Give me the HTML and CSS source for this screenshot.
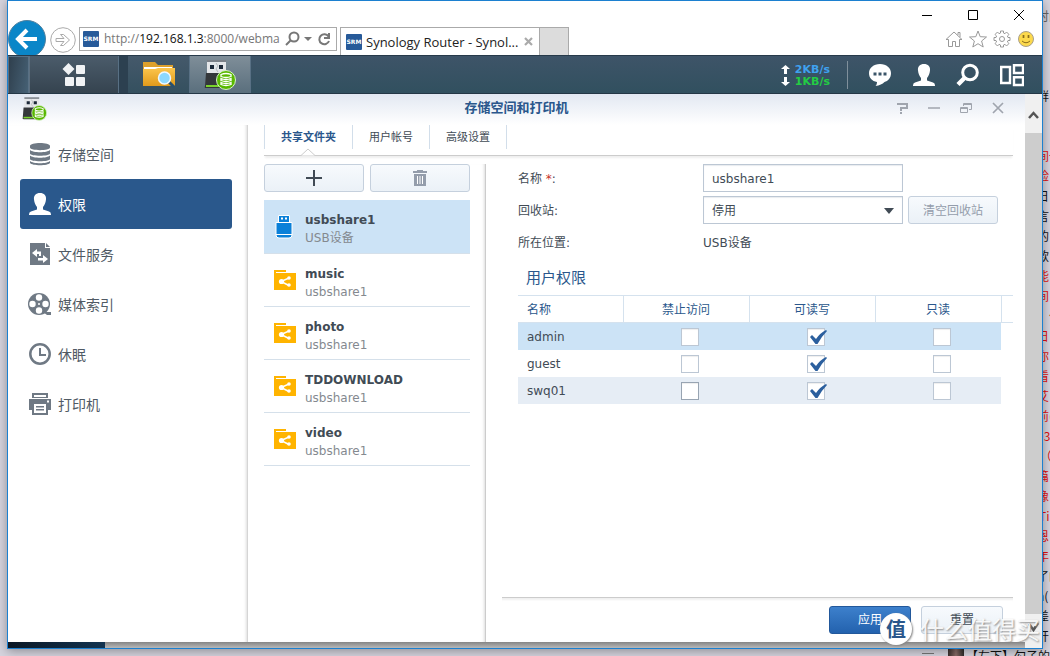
FILE: index.html
```
<!DOCTYPE html>
<html lang="zh-CN">
<head>
<meta charset="utf-8">
<title>Synology Router - Synology</title>
<link rel="stylesheet" href="styles.css">
</head>
<body>
<svg class="defs" aria-hidden="true">
  <defs>
    <linearGradient id="folderGold" x2="0" y2="1"><stop offset="0" stop-color="#fcc54c"/><stop offset="1" stop-color="#e09a1c"/></linearGradient>
  </defs>
  <symbol id="usb" viewBox="0 0 32 30">
    <path d="M3 1h19v12H3z" fill="#e4e6e9"/><path d="M3 0h19v2H3z" fill="#7b8088"/>
    <path d="M6 5h4v4H6zM15 5h4v4h-4z" fill="#1c2838"/><path d="M12 3l2 3-2 3 2 3" fill="none" stroke="#b5b8bc"/>
    <path d="M2 13h21v13q0 2-2 2H2q-2 0-1-2z" fill="#34373a"/><path d="M2 25h15v2H2z" fill="#78d22c"/>
    <circle cx="22" cy="20" r="9.5" fill="#58b800" stroke="#d5f0c5"/>
    <path d="M17 14.500q5-2 10 0v2q-5 2-10 0zM17 18.500q5 2 10 0v2q-5 2-10 0zM17 22.500q5 2 10 0v2q-5 2-10 0z" fill="none" stroke="#fff" stroke-width="1.300"/>
  </symbol>
  <symbol id="user" viewBox="0 0 24 24"><path d="M12 1c4 0 6.500 2.500 6 6.500-.3 3.500-1.500 5.500-3 7.500v2.500l6 2q2 .7 2 3V23H1v-.5q0-2.300 2-3l6-2V15c-1.500-2-2.700-4-3-7.500C5.500 3.500 8 1 12 1z" fill="currentColor"/></symbol>
  <symbol id="share" viewBox="0 0 24 22"><path d="M1 0h12v2H1zM1 2h2v1h20v17H1z" fill="#ffb400"/><path d="M16 8L8 11.500l8 4" stroke="#fff" stroke-width="1.500" fill="none"/><circle cx="8.500" cy="11.500" r="2.600" fill="#fff"/><circle cx="16" cy="8" r="1.800" fill="#fff"/><circle cx="16" cy="15" r="1.800" fill="#fff"/></symbol>
  <symbol id="tick" viewBox="0 0 20 18"><path d="M2 9l2-2 4 4q4-6 10-9l1 1q-5 5-9.500 13h-2z" fill="#2b5f9e"/></symbol>
</svg>

<main class="browser">
  <header class="chrome">
    <nav class="address-row">
      <button class="back" aria-label="后退"><svg viewBox="0 0 38 38" width="38" height="38"><circle cx="19" cy="19" r="18.500" fill="#0a86c8" stroke="#4d7f9e"/><path d="M29 19H11M19 10l-9 9 9 9" fill="none" stroke="#fff" stroke-width="4"/></svg></button>
      <button class="forward" aria-label="前进"><svg viewBox="0 0 26 26" width="26" height="26"><circle cx="13" cy="13" r="12.300" fill="#fff" stroke="#aaa"/><path d="M6 11.500h8l-3.500-4h3l6 5.500-6 5.500h-3l3.500-4H6z" fill="none" stroke="#aaa"/></svg></button>
      <div class="address">
        <span class="favicon">SRM</span>
        <span class="url">http://<b>192.168.1.3</b>:8000/webma</span>
        <svg viewBox="0 0 48 16" width="48" height="16" fill="none" stroke="#777" stroke-width="2"><circle cx="9" cy="6" r="4.500"/><path d="M6 9l-5 5"/><path d="M19 6h8l-4 4z" fill="#777" stroke="none"/><path d="M43.500 5.500A5 5 0 1 0 44 10M44 2v5h-5"/></svg>
      </div>
      <div class="tab"><span class="favicon">SRM</span><span class="tab-title">Synology Router - Synol...</span>
        <button class="plain" aria-label="关闭标签"><svg viewBox="0 0 9 9" width="9" height="9"><path d="M1 1l7 7M8 1L1 8" stroke="#aaa" stroke-width="2.200"/></svg></button></div>
      <button class="new-tab" aria-label="新标签"></button>
    </nav>
    <div class="chrome-right">
      <div class="window-buttons">
        <button class="plain" aria-label="最小化"><svg viewBox="0 0 12 12" width="12" height="12"><path d="M1 6.500h10" stroke="#000"/></svg></button>
        <button class="plain" aria-label="最大化"><svg viewBox="0 0 12 12" width="12" height="12"><path d="M1.500 1.500h9v9h-9z" stroke="#000" fill="none"/></svg></button>
        <button class="plain" aria-label="关闭"><svg viewBox="0 0 12 12" width="12" height="12"><path d="M1 1l10 10M11 1L1 11" stroke="#000"/></svg></button>
      </div>
      <div class="browser-tools">
        <button class="plain" aria-label="主页"><svg viewBox="0 0 18 18" width="18" height="18" fill="none" stroke="#999"><path d="M1 9.500L9 2l8 7.500H14.500v7h-4v-5h-3v5h-4v-7zM13 5V2.500h2V7"/></svg></button>
        <button class="plain" aria-label="收藏"><svg viewBox="0 0 18 18" width="18" height="18" fill="none" stroke="#999"><path d="M9 1l2.200 5.700 6.300.3-4.900 4 1.600 6L9 13.700 3.800 17l1.600-6-4.900-4 6.300-.3z"/></svg></button>
        <button class="plain" aria-label="设置"><svg viewBox="0 0 18 18" width="18" height="18" fill="none" stroke="#999"><path d="M7.500 1h3v2l1.500.7L13.500 2 16 4.500 14.400 6l.6 1.500h2v3h-2l-.6 1.500 1.600 1.500-2.500 2.500-1.500-1.700-1.500.7v2h-3v-2L6 14.300 4.500 16 2 13.500 3.600 12 3 10.500H1v-3h2L3.600 6 2 4.500 4.500 2 6 3.700 7.500 3z"/><circle cx="9" cy="9" r="2.500"/></svg></button>
        <button class="plain" aria-label="反馈"><svg viewBox="0 0 18 18" width="18" height="18"><circle cx="9" cy="9" r="7.500" fill="#fcd94c" stroke="#aaa08a"/><path d="M6.500 5v3M11.500 5v3" stroke="#8a6d1c" stroke-width="1.700"/><path d="M5 11q4 3.500 8 0" fill="none" stroke="#8a6d1c"/></svg></button>
      </div>
    </div>
  </header>

  <div class="taskbar">
    <div class="task-left">
      <span class="task-edge"></span>
      <button class="task task-menu" aria-label="主菜单"><svg viewBox="0 0 24 24" width="24" height="24" fill="#f0f2f4"><path d="M6.500 0l6 6-6 6-6-6z"/><rect x="14" y="2" width="9" height="9" rx="1"/><rect x="3" y="14" width="9" height="9" rx="1"/><rect x="14" y="14" width="9" height="9" rx="1"/></svg></button>
      <span class="task-gap"></span>
      <button class="task" aria-label="文件浏览"><svg viewBox="0 0 34 28" width="34" height="28"><path d="M1 1h12l3 3h15v7H1z" fill="#dda02c"/><path d="M2 6h28v4H2z" fill="#fff"/><path d="M1 8h12l3-1h17v18H1z" fill="url(#folderGold)"/><path d="M26 20l6 6" stroke="#285070" stroke-width="3"/><circle cx="22.500" cy="17" r="6" fill="#8cd8ff" stroke="#f0f8ff" stroke-width="1.500"/></svg></button>
      <button class="task task-active" aria-label="存储空间"><svg width="32" height="30"><use href="#usb"/></svg></button>
    </div>
    <div class="task-right">
      <div class="speed">
        <span class="up"><svg viewBox="0 0 9 9" width="9" height="9"><path d="M4.500 0L9 4H6v5H3V4H0z" fill="#fff"/></svg>2KB/s</span>
        <span class="down"><svg viewBox="0 0 9 9" width="9" height="9"><path d="M4.500 9L9 5H6V0H3v5H0z" fill="#fff"/></svg>1KB/s</span>
      </div>
      <button class="plain" aria-label="通知"><svg viewBox="0 0 24 24" width="24" height="24"><path d="M12 1c6.500 0 11 4 11 9s-3 8-6.500 9c-2 2-5 3.500-9 4 1-1 1.500-2.500 1.500-4C4 18 1 15 1 10s4.500-9 11-9z" fill="#fff"/><path d="M5.500 9.500h3v3h-3zM10.500 9.500h3v3h-3zM15.500 9.500h3v3h-3z" fill="#3a5568"/></svg></button>
      <button class="plain" aria-label="用户"><svg width="24" height="24"><use href="#user"/></svg></button>
      <button class="plain" aria-label="搜索"><svg viewBox="0 0 24 24" width="24" height="24" fill="none" stroke="#fff"><circle cx="14" cy="9.500" r="7.300" stroke-width="3"/><path d="M8.500 15L2 21.500" stroke-width="4.500"/></svg></button>
      <button class="plain" aria-label="小工具"><svg viewBox="0 0 24 24" width="24" height="24" fill="none" stroke="#fff" stroke-width="2.400"><path d="M1.200 4h8.800v16H1.200zM14 2.200h9v7.800h-9zM14 14.200h9V22h-9z"/></svg></button>
    </div>
  </div>

  <div class="viewport">
    <div class="desktop">
      <section class="app">
        <header class="app-head">
          <svg width="25" height="24"><use href="#usb"/></svg>
          <h1>存储空间和打印机</h1>
          <div class="app-buttons">
            <button class="plain" aria-label="帮助"><svg viewBox="0 0 12 12" width="12" height="12" fill="none" stroke="#a0a5ae" stroke-width="2"><path d="M1 2h10v4H5v3M5 10v2"/></svg></button>
            <button class="plain" aria-label="最小化"><svg viewBox="0 0 12 12" width="12" height="12"><path d="M0 6h12" stroke="#a0a5ae" stroke-width="1.500"/></svg></button>
            <button class="plain" aria-label="还原"><svg viewBox="0 0 12 12" width="12" height="12" fill="none" stroke="#a0a5ae"><path d="M.5 5.500h7v5h-7zM3.500 4V1.500h8v6H9M3.500 2.500h8M0 6.500h8"/></svg></button>
            <button class="plain" aria-label="关闭"><svg viewBox="0 0 12 12" width="12" height="12"><path d="M1 1l10 10M11 1L1 11" stroke="#a0a5ae" stroke-width="1.700"/></svg></button>
          </div>
        </header>
        <div class="app-body">
          <nav class="side">
            <a href="#storage"><svg viewBox="0 0 24 24" width="24" height="24" fill="#6f7984"><path d="M2 4c0-4 20-4 20 0v1.500c0 3.500-20 3.500-20 0zM2 8c3 3 17 3 20 0v3.500c0 3-20 3-20 0zM2 13.500c3 3 17 3 20 0V17c0 3-20 3-20 0zM2 19c3 3 17 3 20 0v2c-2 3-18 3-20 0z"/></svg><span>存储空间</span></a>
            <a class="current" href="#rights"><svg width="24" height="24"><use href="#user"/></svg><span>权限</span></a>
            <a href="#files"><svg viewBox="0 0 24 24" width="24" height="24"><path d="M2 1h15v5h5v17H2z" fill="#6f7984"/><path d="M18 1l4 4h-4z" fill="#6f7984"/><path d="M4 11l5-4v2.500h4V14h-2v-2H9v3zM20 17l-5 4v-2.500h-5V16h5v-3z" fill="#fff"/></svg><span>文件服务</span></a>
            <a href="#media"><svg viewBox="0 0 24 24" width="24" height="24"><circle cx="11" cy="12" r="11" fill="#6f7984"/><path d="M15 20l8 0v3h-4z" fill="#6f7984"/><g fill="#fff"><circle cx="11" cy="5.500" r="3.200"/><circle cx="11" cy="18.500" r="3.200"/><circle cx="4.500" cy="12" r="3.200"/><circle cx="17.500" cy="12" r="3.200"/><circle cx="11" cy="12" r="1"/></g></svg><span>媒体索引</span></a>
            <a href="#sleep"><svg viewBox="0 0 24 24" width="24" height="24" fill="none" stroke="#6f7984"><circle cx="12" cy="12" r="9.700" stroke-width="2.500"/><path d="M12 6v7h6" stroke-width="2"/></svg><span>休眠</span></a>
            <a href="#printer"><svg viewBox="0 0 24 24" width="24" height="24"><path d="M4 1h16v5H4zM1 7h22v11H1z" fill="#6f7984"/><path d="M6 3h12v2H6z" fill="#fff"/><path d="M4 12h16v11H4z" fill="#6f7984"/><path d="M6 12h12v9H6z" fill="#fff"/><path d="M8 14h8v1.500H8zM8 17h8v1.500H8z" fill="#6f7984"/><path d="M19 8.500h2v2h-2z" fill="#fff"/></svg><span>打印机</span></a>
          </nav>
          <div class="content">
            <nav class="tabs">
              <a class="selected" href="#shared">共享文件夹<svg class="notch" viewBox="0 0 14 8" width="14" height="8"><path d="M0 7.500L7 1l7 6.500" fill="#fff" stroke="#ccc"/></svg></a><a href="#users">用户帐号</a><a href="#advanced">高级设置</a>
            </nav>
            <div class="columns">
              <div class="folders">
                <div class="folder-actions">
                  <button class="btn" aria-label="新增"><svg viewBox="0 0 16 16" width="16" height="16"><path d="M8 0v16M0 8h16" stroke="#414b55" stroke-width="2"/></svg></button>
                  <button class="btn" aria-label="删除"><svg viewBox="0 0 16 18" width="16" height="18" fill="#949dab"><path d="M5 1h6v1h4v2H1V2h4zM2 5h12v12H2z"/><path d="M5.500 7v8M8 7v8M10.500 7v8" stroke="#fff" stroke-width="1"/></svg></button>
                </div>
                <ul class="folder-list">
                  <li class="chosen"><svg viewBox="0 0 24 26" width="24" height="26"><path d="M5.500 1.500h11v7h2.500v12.500q0 3-3 3h-10q-3 0-3-3V8.500h2.500z" fill="#0a80d8" stroke="#fff"/><path d="M3 8.500h16M3 20.500h16" stroke="#fff"/><path d="M8 3.500h2v2H8zM12 3.500h2v2h-2z" fill="#fff"/></svg><div><strong>usbshare1</strong><span>USB设备</span></div></li>
                  <li><svg width="24" height="22"><use href="#share"/></svg><div><strong>music</strong><span>usbshare1</span></div></li>
                  <li><svg width="24" height="22"><use href="#share"/></svg><div><strong>photo</strong><span>usbshare1</span></div></li>
                  <li><svg width="24" height="22"><use href="#share"/></svg><div><strong>TDDOWNLOAD</strong><span>usbshare1</span></div></li>
                  <li><svg width="24" height="22"><use href="#share"/></svg><div><strong>video</strong><span>usbshare1</span></div></li>
                </ul>
              </div>
              <form class="detail">
                <div class="fields">
                  <label for="name">名称 <em>*</em>:</label><input class="box" id="name" value="usbshare1">
                  <label for="bin">回收站:</label>
                  <div class="bin-row"><span class="select-wrap"><select class="box" id="bin"><option>停用</option></select><svg class="caret" viewBox="0 0 10 6" width="10" height="6"><path d="M0 0h10L5 6z" fill="#414b55"/></svg></span><button class="btn empty-bin" type="button" disabled>清空回收站</button></div>
                  <span class="text">所在位置:</span><span class="text">USB设备</span>
                </div>
                <h2>用户权限</h2>
                <table>
                  <colgroup><col class="c-name"><col class="c-mode"><col class="c-mode"><col class="c-mode"><col></colgroup>
                  <thead><tr><th>名称</th><th>禁止访问</th><th>可读写</th><th>只读</th><th></th></tr></thead>
                  <tbody>
                    <tr class="row-on"><td>admin</td><td><span class="check"><input type="checkbox" aria-label="admin 禁止访问"></span></td><td><span class="check"><input type="checkbox" checked aria-label="admin 可读写"><svg width="20" height="18"><use href="#tick"/></svg></span></td><td><span class="check"><input type="checkbox" aria-label="admin 只读"></span></td><td></td></tr>
                    <tr><td>guest</td><td><span class="check"><input type="checkbox" aria-label="guest 禁止访问"></span></td><td><span class="check"><input type="checkbox" checked aria-label="guest 可读写"><svg width="20" height="18"><use href="#tick"/></svg></span></td><td><span class="check"><input type="checkbox" aria-label="guest 只读"></span></td><td></td></tr>
                    <tr class="row-alt"><td>swq01</td><td><span class="check"><input class="hot" type="checkbox" aria-label="swq01 禁止访问"></span></td><td><span class="check"><input type="checkbox" checked aria-label="swq01 可读写"><svg width="20" height="18"><use href="#tick"/></svg></span></td><td><span class="check"><input type="checkbox" aria-label="swq01 只读"></span></td><td></td></tr>
                  </tbody>
                </table>
                <div class="form-foot"><button class="btn primary" type="button">应用</button><button class="btn" type="reset">重置</button></div>
              </form>
            </div>
          </div>
        </div>
      </section>
      <div class="wallpaper"></div>
    </div>
    <div class="scrollbar">
      <svg viewBox="0 0 17 39" width="17" height="39"><path d="M4 24l4.500-5 4.500 5" fill="none" stroke="#555" stroke-width="2.500"/></svg>
      <div class="thumb"></div>
      <svg viewBox="0 0 17 34" width="17" height="34"><path d="M4 10l4.500 6 4.500-7" fill="none" stroke="#555" stroke-width="2.500"/></svg>
    </div>
  </div>
</main>

<aside class="behind" aria-hidden="true">
  <p class="grey">时间</p><p></p><p></p><p></p><p class="black">群</p><p></p><p></p>
  <p>间一</p><p>险</p><p class="black">日</p><p class="black">言</p><p class="black">的</p><p class="black">款</p><p>能</p><p>间</p><p>，便</p><p>日</p><p>你</p><p>看</p><p>艾</p><p>前(</p><p>03</p><p>&nbsp;（</p><p>篇</p><p>像</p><p>.Ti</p><p>恩</p><p>年</p><p class="black">了的</p><p class="black">n(</p><p class="black">差</p><p class="black">开</p>
</aside>
<footer class="behind-foot" aria-hidden="true"><span class="arrow"></span><span class="avatar"></span><span>【左下】勾子的</span></footer>

<div class="watermark"><span class="seal">值</span><span>什么值得买</span></div>
</body>
</html>
```

FILE: styles.css
```
* { box-sizing: border-box; }

body {
  margin: 0;
  height: 100vh;
  min-height: 560px;
  display: grid;
  grid-template: minmax(0, 1fr) 7px / 7px minmax(0, 1fr) 7px;
  position: relative;
  overflow: hidden;
  background: #d6d4de;
  color: #414b55;
  font: 12px/18px "DejaVu Sans", "Noto Sans CJK SC", sans-serif;
}

h1, h2, p, ul { margin: 0; padding: 0; }
a { color: inherit; text-decoration: none; }
button, input, select { font: inherit; color: inherit; }
svg { display: block; flex: none; }
.defs { position: absolute; width: 0; height: 0; }
.plain { padding: 0; border: 0; background: none; color: inherit; }

.browser {
  grid-area: 1 / 2;
  display: flex;
  flex-direction: column;
  border: 1px solid #1c80d0;
  background: #fff;
  box-shadow: 0 2px 10px rgba(0, 0, 0, .35);
  z-index: 1;
}

/* Browser chrome */
.chrome { display: flex; justify-content: space-between; height: 54px; }
.address-row { display: flex; align-items: flex-start; padding-top: 26px; font: 13px/24px "Open Sans", "Noto Sans", sans-serif; color: #222; }
.back { align-self: flex-end; width: 39px; height: 35px; padding: 0; border: 0; background: none; overflow: hidden; display: flex; align-items: flex-start; }
.forward { width: 26px; height: 26px; margin: 0 3px; padding: 0; border: 0; background: none; }
.address { display: flex; align-items: center; gap: 5px; width: 258px; height: 24px; margin-right: 3px; padding: 0 3px; border: 1px solid #aaa; }
.favicon { flex: none; width: 16px; height: 16px; border-radius: 1px; background: #275a99; color: #fff; font: bold 6px/16px "DejaVu Sans", sans-serif; text-align: center; }
.url { flex: 1; white-space: nowrap; color: #777; font-size: 12px; }
.url b { color: #111; font-weight: 400; }
.tab { display: flex; align-items: center; width: 200px; height: 28px; padding: 0 6px 0 5px; border: 1px solid #aaa; border-bottom: 0; }
.tab-title { flex: 1; padding-left: 4px; white-space: nowrap; }
.new-tab { width: 29px; height: 28px; border: 1px solid #aaa; border-width: 1px 1px 0 0; background: #dcdcdc; padding: 0; }
.chrome-right { display: flex; flex-direction: column; justify-content: space-between; align-items: flex-end; padding: 8px 7px 7px 0; }
.window-buttons { display: flex; gap: 34px; padding-right: 10px; }
.browser-tools { display: flex; gap: 6px; }

/* Router taskbar */
.taskbar {
  display: flex;
  justify-content: space-between;
  height: 39px;
  border-top: 1px solid #273a4a;
  border-bottom: 1px solid #243746;
  background: linear-gradient(#3e5468, #31505f);
}
.task-left { display: flex; }
.task-edge { width: 21px; background: linear-gradient(100deg, #2f3f4d, #466175); border: 1px solid #587084; border-bottom: 0; }
.task-gap { width: 9px; background: #2c4050; }
.task { display: grid; place-items: center; width: 62px; padding: 0; border: 0; border-right: 1px solid #587084; background: linear-gradient(#45596b, #34505f); }
.task-menu { width: 90px; border-left: 1px solid #5d7080; background: linear-gradient(#4b5c6b, #35434f); }
.task-active { width: 61px; background: linear-gradient(#7f8e99, #5a6f7d); }
.task-right { display: flex; align-items: center; gap: 20px; padding-right: 18px; color: #fff; }
.speed { display: flex; flex-direction: column; padding: 3px 17px 1px 0; border-right: 1px solid #80909c; font-size: 11px; font-weight: 700; line-height: 12px; }
.speed span { display: flex; align-items: center; gap: 5px; }
.up { color: #3fa2f0; }
.down { color: #23cc44; }

/* Application window */
.viewport { flex: 1; min-height: 0; display: flex; }
.desktop { flex: 1; min-width: 0; display: flex; flex-direction: column; }
.wallpaper { height: 6px; background: linear-gradient(90deg, #0a1724, #123350) 0 0 / 97px 6px no-repeat, linear-gradient(#858585, #b8b8b8); }
.scrollbar { display: flex; flex-direction: column; width: 17px; background: #f0f0f0; }
.thumb { flex: 1; background: #cdcdcd; }
.app { flex: 1; min-height: 0; display: flex; flex-direction: column; background: #fff; }
.app-head { display: grid; grid-template-columns: 1fr auto 1fr; align-items: start; height: 31px; padding: 3px 21px 0 14px; background: linear-gradient(#e2e8f2, #fff); }
.app-head h1 { color: #2a578c; font-size: 13px; line-height: 22px; padding-left: 7px; }
.app-buttons { display: flex; justify-content: flex-end; gap: 20px; padding-top: 5px; }
.app-body { flex: 1; min-height: 0; display: flex; }
.side { width: 240px; padding: 4px 15px 0 12px; border-right: 1px solid #d5d5d5; box-shadow: inset -3px 0 3px -2px #ddd; font-size: 14px; color: #505a64; }
.side a { display: flex; align-items: center; gap: 6px; height: 50px; padding-left: 8px; border-radius: 3px; }
.side span { padding-top: 2px; }
.side .current { background: #2a588c; color: #fff; }
.content { flex: 1; min-width: 0; display: flex; flex-direction: column; padding: 0 12px 0 16px; }

.tabs { display: flex; height: 31px; border-bottom: 1px solid #ccc; box-shadow: 0 3px 2px -1px #eee; font-size: 11px; }
.tabs a { position: relative; height: 24px; padding: 0 16px; border-left: 1px solid #d2deea; line-height: 26px; }
.tabs a:last-child { border-right: 1px solid #d2deea; }
.tabs .selected { color: #2a578c; font-weight: 700; }
.notch { position: absolute; left: 36px; bottom: -7px; }
.columns { flex: 1; min-height: 0; display: flex; padding-top: 8px; }

.btn { display: grid; place-items: center; height: 28px; padding: 0; border: 1px solid #c5d0dd; border-radius: 3px; background: linear-gradient(#f7fafd, #ebf1f7); }
.folders { width: 222px; padding-right: 15px; border-right: 1px solid #ccc; box-shadow: inset -3px 0 3px -2px #ddd; }
.folder-actions { display: grid; grid-template-columns: 1fr 1fr; gap: 6px; margin-bottom: 8px; }
.folder-list { list-style: none; }
.folder-list li { display: flex; align-items: center; gap: 8px; height: 53px; padding: 1px 0 0 9px; border-bottom: 1px solid #d5e0ea; }
.folder-list .chosen { height: 54px; background: #cce3f6; }
.folder-list div { display: flex; flex-direction: column; padding-top: 4px; }
.folder-list span { color: #84898f; }

.detail { flex: 1; min-width: 0; display: flex; flex-direction: column; padding-left: 16px; }
.fields { display: grid; grid-template-columns: 185px minmax(0, 1fr); row-gap: 4px; align-items: center; grid-auto-rows: 28px; padding-left: 16px; }
.fields label, .fields .text { padding-top: 2px; }
.fields em { color: #c8322a; font-style: normal; }
.box { width: 200px; height: 28px; padding: 1px 8px 0; border: 1px solid #bcc7d4; border-radius: 0; background: #fff; box-shadow: inset 0 1px 1px #e8ebef; appearance: none; outline: 0; }
.bin-row { display: flex; gap: 5px; }
.select-wrap { position: relative; }
.caret { position: absolute; right: 9px; top: 12px; pointer-events: none; }
.empty-bin { width: 90px; padding-top: 1px; color: #949dab; }
.detail h2 { padding: 13px 0 8px 24px; color: #2a578c; font-size: 15px; font-weight: 400; line-height: 18px; }

table { width: calc(100% - 16px); margin-left: 16px; table-layout: fixed; border-collapse: collapse; }
.c-name { width: 105px; }
.c-mode { width: 126px; }
th { height: 27px; padding: 1px 0 0; border: 1px solid #d5e2ee; border-left: 0; color: #2a578c; font-weight: 400; }
th:first-child { padding-left: 9px; text-align: left; }
th:last-child { border-right: 0; }
td { height: 27px; padding: 1px 0 0 7px; }
td:first-child { padding-left: 9px; }
.row-on td:not(:last-child) { background: #cce3f6; }
.row-alt td:not(:last-child) { background: #e6edf5; }
.check { position: relative; display: block; width: 18px; height: 18px; margin: 0 auto; }
.check input { appearance: none; display: block; width: 18px; height: 18px; margin: 0; border: 1px solid #bcc7d4; background: #fff; box-shadow: inset 0 1px 1px #eee; }
.check .hot { border-color: #98a4b2; }
.check svg { position: absolute; left: 1px; top: 0; pointer-events: none; }

.form-foot { display: flex; justify-content: flex-end; gap: 10px; margin-top: auto; padding: 8px 10px 8px 0; border-top: 1px solid #ccc; box-shadow: inset 0 3px 2px -1px #f0f0f0; }
.form-foot .btn { width: 82px; }
.form-foot .primary { border-color: #22589b; background: linear-gradient(#3d80cc, #2362ae); color: #fff; }

/* Page lying behind the browser window */
.behind { grid-area: 1 / 3; overflow: hidden; padding-top: 6px; font: 12px/20px "Noto Sans CJK SC", sans-serif; color: #e01010; }
.behind p { height: 20px; margin-left: -6px; white-space: nowrap; }
.behind .black { color: #111; }
.behind .grey { color: #666; }
.behind-foot { grid-area: 2 / 1 / 3 / 4; display: flex; align-items: flex-start; justify-content: flex-end; gap: 2px; overflow: hidden; white-space: nowrap; color: #111; line-height: 16px; }
.arrow { width: 12px; height: 5px; border-bottom: 1px solid #777; margin-right: 12px; flex: none; }
.avatar { flex: none; width: 16px; height: 7px; background: linear-gradient(90deg, #3a2f2c, #8a6d68, #2c2a28); }

.watermark { position: absolute; z-index: 2; right: 10px; bottom: 10px; display: flex; align-items: center; gap: 8px; color: rgba(255, 255, 255, .9); font: 24px/34px "Noto Sans CJK SC", sans-serif; text-shadow: 1px 1px 2px #888; pointer-events: none; }
.seal { width: 32px; height: 32px; border-radius: 50%; background: #fff; box-shadow: 1px 1px 2px #888; color: #2a578c; font: bold 20px/32px "Noto Sans CJK SC", sans-serif; text-align: center; text-shadow: none; }
```
